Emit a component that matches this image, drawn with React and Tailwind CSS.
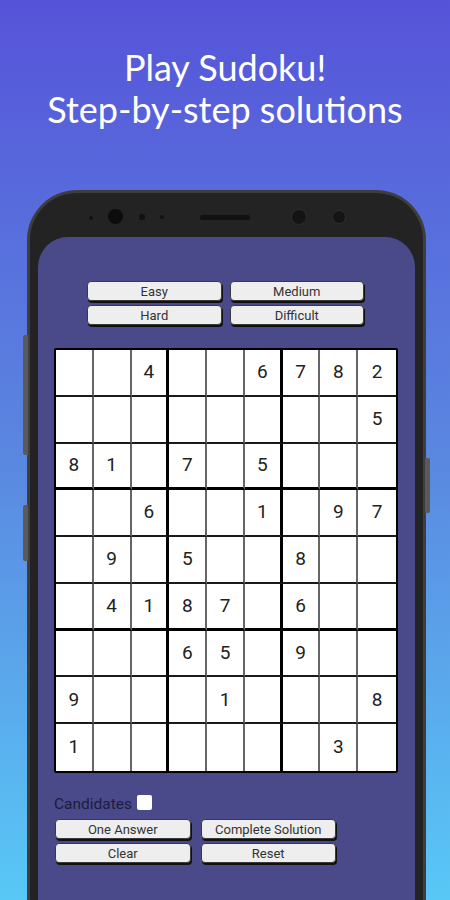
import React from 'react';

const puzzle = [
  [0, 0, 4, 0, 0, 6, 7, 8, 2],
  [0, 0, 0, 0, 0, 0, 0, 0, 5],
  [8, 1, 0, 7, 0, 5, 0, 0, 0],
  [0, 0, 6, 0, 0, 1, 0, 9, 7],
  [0, 9, 0, 5, 0, 0, 8, 0, 0],
  [0, 4, 1, 8, 7, 0, 6, 0, 0],
  [0, 0, 0, 6, 5, 0, 9, 0, 0],
  [9, 0, 0, 0, 1, 0, 0, 0, 8],
  [1, 0, 0, 0, 0, 0, 0, 3, 0],
];

const GrayButton = ({ children, className = '' }) => (
  <button
    className={`h-[20px] rounded-[4px] border border-[#3a3a3a] bg-[#eeeeee] text-[13px] leading-none text-[#333] shadow-[1px_2px_0_#111] ${className}`}
  >
    {children}
  </button>
);

const Cell = ({ value, r, c }) => {
  // thick lines between 3x3 boxes, thinner ones elsewhere
  const right =
    c === 8 ? '' : c === 2 || c === 5 ? 'border-r-[3px] border-r-black' : 'border-r-2 border-r-[#666]';
  const bottom =
    r === 8 ? '' : r === 2 || r === 5 ? 'border-b-[3px] border-b-black' : 'border-b-2 border-b-[#1a1a1a]';
  return (
    <div className={`flex items-center justify-center bg-white text-[19px] text-[#222] ${right} ${bottom}`}>
      {value || ''}
    </div>
  );
};

const App = () => {
  return (
    <div
      className="h-[900px] w-[450px] overflow-hidden bg-linear-to-b from-[#5653d9] via-[#5a86e0] to-[#58c8f6]"
      style={{ fontFamily: 'Roboto, "Liberation Sans", sans-serif' }}
    >
      {/* Header */}
      <div
        className="pt-[46px] text-center text-[36px] leading-[42px] text-white"
        style={{ fontFamily: 'Lato, "Open Sans", sans-serif' }}
      >
        <div>Play Sudoku!</div>
        <div>Step-by-step solutions</div>
      </div>

      {/* Phone */}
      <div className="relative ml-[27px] mt-[60px] w-[399px]">
        {/* side buttons */}
        <div className="absolute left-[-4px] top-[145px] h-[120px] w-[5px] rounded-l-[2px] bg-[#5a5a5a]" />
        <div className="absolute left-[-4px] top-[315px] h-[56px] w-[5px] rounded-l-[2px] bg-[#5a5a5a]" />
        <div className="absolute right-[-4px] top-[268px] h-[55px] w-[5px] rounded-r-[2px] bg-[#5a5a5a]" />

        <div className="h-[720px] rounded-t-[50px] border-x-[3px] border-t-[3px] border-[#3e3e3e] bg-[#232323] px-[8px] pt-[44px]">
          {/* top bezel details */}
          <div className="absolute left-[62px] top-[26px] h-[4px] w-[4px] rounded-full bg-[#111]" />
          <div className="absolute left-[81px] top-[19px] h-[15px] w-[15px] rounded-full bg-[#0c0c0c]" />
          <div className="absolute left-[112px] top-[24px] h-[6px] w-[6px] rounded-full bg-[#111]" />
          <div className="absolute left-[133px] top-[25px] h-[4px] w-[4px] rounded-full bg-[#111]" />
          <div className="absolute left-[173px] top-[25px] h-[5px] w-[50px] rounded-full bg-[#111]" />
          <div className="absolute left-[265px] top-[20px] h-[14px] w-[14px] rounded-full bg-[#141414] ring-1 ring-[#2c2c2c]" />
          <div className="absolute left-[306px] top-[21px] h-[12px] w-[12px] rounded-full bg-[#141414] ring-1 ring-[#2c2c2c]" />

          {/* Screen */}
          <div className="h-[680px] rounded-t-[30px] bg-[#4a4a8a] pt-[44px]">
            <div className="ml-[49px] grid w-[277px] grid-cols-2 gap-x-[8px] gap-y-[4px]">
              <GrayButton>Easy</GrayButton>
              <GrayButton>Medium</GrayButton>
              <GrayButton>Hard</GrayButton>
              <GrayButton>Difficult</GrayButton>
            </div>

            <div className="ml-[16px] mt-[23px] grid h-[425px] w-[344px] grid-cols-9 grid-rows-9 overflow-hidden rounded-[2px] border-2 border-black">
              {puzzle.map((row, r) =>
                row.map((v, c) => <Cell key={`${r}-${c}`} value={v} r={r} c={c} />)
              )}
            </div>

            <div className="ml-[16px] mt-[20px] flex items-center">
              <span className="text-[15.5px] text-[#1c1c40]">Candidates</span>
              <span className="ml-[5px] mb-[4px] h-[15px] w-[15px] rounded-[2px] bg-white" />
            </div>
            <div className="ml-[17px] mt-[3px] grid w-[281px] grid-cols-2 gap-x-[10px] gap-y-[4px]">
              <GrayButton>One Answer</GrayButton>
              <GrayButton>Complete Solution</GrayButton>
              <GrayButton>Clear</GrayButton>
              <GrayButton>Reset</GrayButton>
            </div>
          </div>
        </div>
      </div>
    </div>
  );
};

export default App;
